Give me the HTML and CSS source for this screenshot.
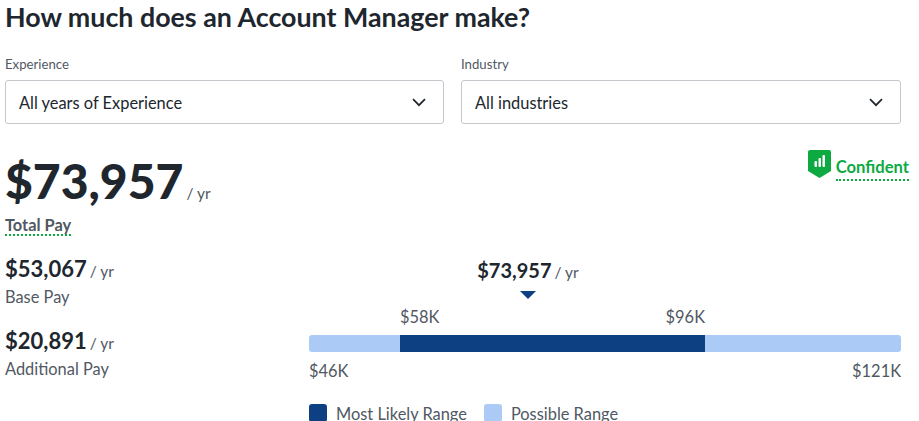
FILE: index.html
```html
<!DOCTYPE html>
<html lang="en">
<head>
<meta charset="utf-8">
<title>Account Manager pay</title>
<link rel="stylesheet" href="styles.css">
</head>
<body>
<main class="page">
  <h1 class="title">How much does an Account Manager make?</h1>
  <div class="filters">
    <div class="filter">
      <div class="filter-label">Experience</div>
      <div class="select"><span>All years of Experience</span>
        <svg class="chev" width="14" height="9" viewBox="0 0 14 9"><path d="M1 1.2l6 6 6-6" fill="none" stroke="#20262e" stroke-width="1.7"/></svg>
      </div>
    </div>
    <div class="filter">
      <div class="filter-label">Industry</div>
      <div class="select"><span>All industries</span>
        <svg class="chev" width="14" height="9" viewBox="0 0 14 9"><path d="M1 1.2l6 6 6-6" fill="none" stroke="#20262e" stroke-width="1.7"/></svg>
      </div>
    </div>
  </div>
  <div class="total-row">
    <div class="total">
      <div class="total-value"><span class="total-num">$73,957</span><span class="per total-per">/ yr</span></div>
      <div class="total-label"><span class="dotted">Total Pay</span></div>
    </div>
    <div class="confidence">
      <svg class="shield" width="23" height="28" viewBox="0 0 23 28">
        <path d="M2 0h19a2 2 0 0 1 2 2v19l-11.500 7L0 21V2a2 2 0 0 1 2-2z" fill="#0caa41"/>
        <rect x="6.500" y="11" width="2.500" height="6" rx="1" fill="#fff"/>
        <rect x="10.500" y="8" width="2.500" height="9" rx="1" fill="#fff"/>
        <rect x="14.500" y="5" width="2.500" height="12" rx="1" fill="#fff"/>
      </svg>
      <span class="confidence-text">Confident</span>
    </div>
  </div>
  <div class="detail">
    <div class="breakdown">
      <div class="pay-item">
        <div><span class="pay-num">$53,067</span><span class="per">/ yr</span></div>
        <div class="pay-label">Base Pay</div>
      </div>
      <div class="pay-item">
        <div><span class="pay-num">$20,891</span><span class="per">/ yr</span></div>
        <div class="pay-label">Additional Pay</div>
      </div>
    </div>
    <div class="chart">
      <div class="marker">
        <div><span class="pay-num marker-num">$73,957</span><span class="per">/ yr</span></div>
        <div class="tri"></div>
      </div>
      <div class="tiers">
        <div class="mid-labels"><span>$58K</span><span>$96K</span></div>
      </div>
      <div class="tiers bar">
        <div class="seg-light seg-left"></div>
        <div class="seg-dark"></div>
        <div class="seg-light seg-right"></div>
      </div>
      <div class="ends"><span>$46K</span><span>$121K</span></div>
      <div class="legend">
        <span class="legend-item"><i class="swatch swatch-dark"></i>Most Likely Range</span>
        <span class="legend-item"><i class="swatch swatch-light"></i>Possible Range</span>
      </div>
    </div>
  </div>
</main>
</body>
</html>
```
FILE: styles.css
```css
html, body {
  margin: 0;
  height: 421px;
  overflow: hidden;
  background: #fff;
}
body {
  font-family: Lato, "Open Sans", sans-serif;
  color: #20262e;
}
.page {
  padding: 0 10px 0 5px;
}
.title {
  margin: 0;
  font-size: 26.800px;
  line-height: 34px;
  font-weight: 700;
}
.filters {
  display: grid;
  grid-template-columns: 439px 440px;
  gap: 17px;
  margin-top: 21px;
}
.filter-label {
  font-size: 13.200px;
  line-height: 18px;
  color: #505863;
  margin-bottom: 7px;
}
.select {
  box-sizing: border-box;
  height: 44px;
  border: 1px solid #c4c7cc;
  border-radius: 3px;
  padding: 0 17px 0 13px;
  display: flex;
  align-items: center;
  justify-content: space-between;
  font-size: 16.400px;
}
.total-row {
  display: flex;
  justify-content: space-between;
  margin-top: 26px;
}
.total-value {
  line-height: 62px;
  height: 62px;
}
.total-num {
  font-size: 48px;
  font-weight: 900;
}
.per {
  font-size: 15.500px;
  color: #505863;
  margin-left: 3px;
}
.total-label {
  font-size: 16.400px;
  font-weight: 700;
  color: #505863;
  line-height: 20px;
  margin-top: 3px;
}
.dotted {
  display: inline-block;
  border-bottom: 2px dotted #0caa41;
  line-height: 19px;
}
.confidence {
  display: flex;
  align-items: flex-start;
  gap: 5px;
}
.shield {
  display: block;
}
.confidence-text {
  font-size: 16.600px;
  font-weight: 700;
  color: #0caa41;
  line-height: 20px;
  margin-top: 7px;
  border-bottom: 2px dotted #0caa41;
  padding-bottom: 2px;
}
.detail {
  display: flex;
  margin-top: 12px;
}
.breakdown {
  width: 304px;
  flex: none;
  padding-top: 6px;
}
.pay-item {
  height: 72px;
}
.pay-num {
  font-size: 22px;
  font-weight: 700;
  line-height: 30px;
}
.marker-num {
  font-size: 20px;
}
.pay-label {
  font-size: 16.400px;
  line-height: 20px;
  color: #505863;
  margin-top: 3px;
}
.chart {
  width: 592px;
  flex: none;
}
.marker {
  width: 438px;
  text-align: center;
  padding-top: 7px;
}
.tri {
  width: 0;
  height: 0;
  margin: 6px auto 0;
  border-left: 8px solid transparent;
  border-right: 8px solid transparent;
  border-top: 8px solid #0d3f83;
}
.tiers {
  display: grid;
  grid-template-columns: 91px 305px 196px;
}
.mid-labels {
  grid-column: 2;
  display: flex;
  justify-content: space-between;
  font-size: 16.400px;
  line-height: 20px;
  color: #505863;
  margin-top: 8px;
  margin-bottom: 8px;
}
.bar {
  height: 17px;
}
.seg-light {
  background: #abcbf6;
}
.seg-left {
  border-radius: 3px 0 0 3px;
}
.seg-right {
  border-radius: 0 3px 3px 0;
}
.seg-dark {
  background: #0d3f83;
}
.ends {
  display: flex;
  justify-content: space-between;
  font-size: 16.400px;
  line-height: 20px;
  color: #505863;
  margin-top: 9px;
}
.legend {
  display: flex;
  gap: 17px;
  margin-top: 23px;
  font-size: 16.400px;
  line-height: 20px;
  color: #505863;
}
.legend-item {
  display: flex;
  align-items: flex-start;
}
.swatch {
  display: block;
  width: 18px;
  height: 18px;
  border-radius: 3px;
  margin-right: 9px;
  margin-top: 0;
}
.swatch-dark {
  background: #0d3f83;
}
.swatch-light {
  background: #abcbf6;
}
```
